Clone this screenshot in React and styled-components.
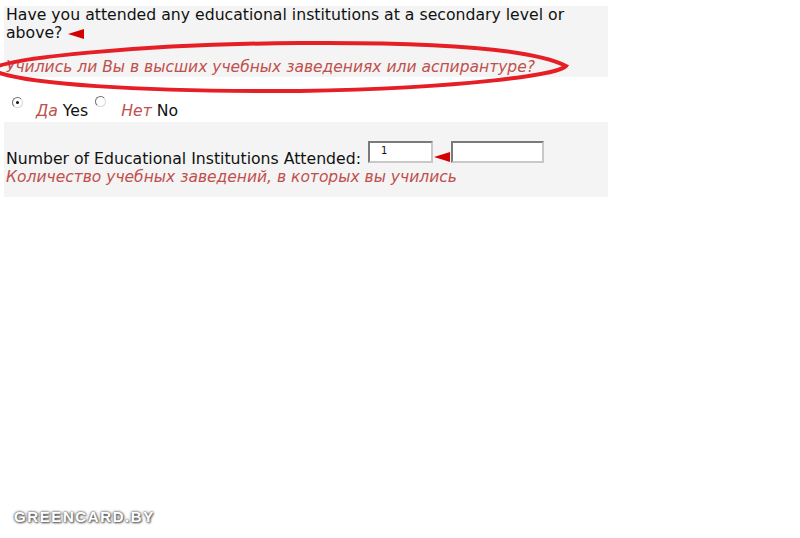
import React from "react";
import styled, { createGlobalStyle } from "styled-components";

const GlobalStyle = createGlobalStyle`
  html, body {
    margin: 0;
    padding: 0;
    background: #ffffff;
  }
  body {
    font-family: "DejaVu Sans", Verdana, sans-serif;
    color: #111111;
  }
`;

const Page = styled.div`
  position: relative;
  width: 800px;
  height: 538px;
  overflow: hidden;
  background: #ffffff;
`;

const Form = styled.div`
  width: 604px;
  margin-left: 4px;
  padding-top: 6px;
`;

const Panel = styled.div`
  background: #f4f4f4;
  padding: ${(p) => p.$pad};
`;

const Question = styled.div`
  font-size: 15.7px;
  line-height: 18px;
  width: 590px;
`;

const Hint = styled.div`
  font-size: 15.5px;
  line-height: 18px;
  font-style: italic;
  color: #c0504d;
  margin-top: ${(p) => p.$top || 0}px;
  padding-left: ${(p) => p.$left || 0}px;
  white-space: nowrap;
`;

const Arrow = styled.span`
  display: inline-block;
  width: 0;
  height: 0;
  border-top: 5px solid transparent;
  border-bottom: 5px solid transparent;
  border-right: 16px solid #d40000;
  margin-left: ${(p) => p.$left || 0}px;
  vertical-align: middle;
`;

const RadioRow = styled.div`
  display: flex;
  align-items: flex-start;
  height: 45px;
  padding: 20px 0 0 8px;
  box-sizing: border-box;
  font-size: 15.7px;
  line-height: 18px;
`;

const Radio = styled.span`
  width: 9px;
  height: 9px;
  border-radius: 50%;
  border: 1px solid;
  border-color: #6f6f6f #d8d8d8 #d8d8d8 #6f6f6f;
  background: #ffffff;
  display: flex;
  align-items: center;
  justify-content: center;
  margin-top: ${(p) => p.$top}px;
  margin-left: ${(p) => p.$left || 0}px;
  flex-shrink: 0;
  &::after {
    content: "";
    width: 3px;
    height: 3px;
    border-radius: 50%;
    background: ${(p) => (p.$checked ? "#111" : "transparent")};
  }
`;

const Choice = styled.span`
  margin: 5px 0 0 ${(p) => p.$left}px;
  white-space: nowrap;
`;

const Ru = styled.em`
  color: #c0504d;
`;

const FieldRow = styled.div`
  display: flex;
  align-items: flex-end;
  padding-left: 2px;
`;

const Label = styled.span`
  font-size: 15.7px;
  line-height: 18px;
  margin-right: 7px;
  white-space: nowrap;
`;

const Input = styled.div`
  width: ${(p) => p.$w}px;
  height: 22px;
  box-sizing: border-box;
  background: #ffffff;
  border: 2px solid;
  border-color: #7a7a7a #c8c8c8 #c8c8c8 #7a7a7a;
  margin-bottom: 5px;
  font-size: 10px;
  line-height: 16px;
  padding-left: 11px;
`;

const FieldArrow = styled(Arrow)`
  align-self: flex-end;
  margin: 0 1px 6px 1px;
`;

const Ring = styled.svg`
  position: absolute;
  left: 0;
  top: 0;
  pointer-events: none;
`;

const Watermark = styled.div`
  position: absolute;
  left: 14px;
  bottom: 13px;
  font-family: "Liberation Sans", Arial, sans-serif;
  font-weight: bold;
  font-size: 15px;
  letter-spacing: 1.6px;
  color: #ffffff;
  text-shadow: 0 0 3px #555, 0 0 2px #777, 1px 1px 2px #666;
`;

export default function App() {
  return (
    <Page>
      <GlobalStyle />
      <Form>
        <Panel $pad="0 2px 1px 2px">
          <Question>
            Have you attended any educational institutions at a secondary level or above?
            <Arrow $left={6} />
          </Question>
          <Hint $top={16}>Учились ли Вы в высших учебных заведениях или аспирантуре?</Hint>
        </Panel>
        <RadioRow>
          <Radio $checked $top={0} />
          <Choice $left={13}>
            <Ru>Да</Ru> Yes
          </Choice>
          <Radio $top={-1} $left={7} />
          <Choice $left={15}>
            <Ru>Нет</Ru> No
          </Choice>
        </RadioRow>
        <Panel $pad="19px 0 11px 0">
          <FieldRow>
            <Label>Number of Educational Institutions Attended:</Label>
            <Input $w={65}>1</Input>
            <FieldArrow />
            <Input $w={93} />
          </FieldRow>
          <Hint $left={2}>Количество учебных заведений, в которых вы учились</Hint>
        </Panel>
      </Form>
      <Ring width="800" height="120" viewBox="0 0 800 120">
        <path
          d="M 300 43 C 430 42 530 48 566 66 C 560 74 470 88 300 91 C 140 92 20 84 -8 70 C -4 58 150 44 300 43 Z"
          fill="none"
          stroke="#e61e25"
          strokeWidth="4"
        />
      </Ring>
      <Watermark>GREENCARD.BY</Watermark>
    </Page>
  );
}
